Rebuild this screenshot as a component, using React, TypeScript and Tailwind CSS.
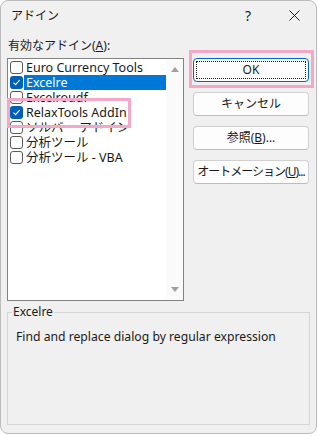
import React from "react";

const items: { label: string; checked: boolean; selected?: boolean }[] = [
  { label: "Euro Currency Tools", checked: false },
  { label: "Excelre", checked: true, selected: true },
  { label: "Excelroudf", checked: false },
  { label: "RelaxTools AddIn", checked: true },
  { label: "ソルバー アドイン", checked: false },
  { label: "分析ツール", checked: false },
  { label: "分析ツール - VBA", checked: false },
];

function Check({ checked }: { checked: boolean }) {
  if (checked) {
    return (
      <div className="w-[13px] h-[13px] rounded-[3px] bg-[#005fb8] flex items-center justify-center shrink-0">
        <svg width="9" height="9" viewBox="0 0 9 9">
          <path d="M1.5 4.6 L3.6 6.6 L7.6 2.2" fill="none" stroke="white" strokeWidth="1.1" />
        </svg>
      </div>
    );
  }
  return <div className="w-[13px] h-[13px] rounded-[3px] border border-[#5a5a5a] bg-white shrink-0" />;
}

function Btn({ children, focus }: { children: React.ReactNode; focus?: boolean }) {
  if (focus) {
    return (
      <div className="w-[116px] h-[24px] rounded-[4px] border border-[#0067c0] bg-[#fdfdfd] p-[2px]">
        <div className="w-full h-full border border-dotted border-[#1a1a1a] flex items-center justify-center text-[12px] text-[#1a1a1a]">
          <span className="whitespace-nowrap">{children}</span>
        </div>
      </div>
    );
  }
  return (
    <div className="w-[116px] h-[24px] rounded-[4px] border border-[#d0d0d0] border-b-[#bcbcbc] bg-[#fdfdfd] flex items-center justify-center text-[12px] text-[#1a1a1a]">
      <span className="whitespace-nowrap">{children}</span>
    </div>
  );
}

export default function App() {
  return (
    <div className="w-[318px] h-[436px] bg-white relative font-['Noto_Sans','Noto_Sans_CJK_JP',sans-serif] leading-[16px] text-[#1a1a1a]">
      <div className="w-[317px] h-[434px] rounded-[8px] border border-[#bcbcbc] bg-[#f0f0f0] flex flex-col">
        {/* title bar */}
        <div className="h-[29px] flex items-center pl-[10px] text-[12px]">
          <span className="flex-1">アドイン</span>
          <span className="w-[20px] text-center text-[14px] mr-[30px]">?</span>
          <div className="w-[12px] flex items-center justify-center mr-[16px]">
            <svg width="11" height="11" viewBox="0 0 11 11">
              <path d="M0.5 0.5 L10.5 10.5 M10.5 0.5 L0.5 10.5" stroke="#1a1a1a" strokeWidth="1" />
            </svg>
          </div>
        </div>
        {/* body */}
        <div className="flex pl-[6px]">
          <div className="flex flex-col w-[177px]">
            <div className="mt-[8px] h-[16px] pl-[1px] text-[12px]">
              有効なアドイン(<span className="underline">A</span>):
            </div>
            <div className="mt-[4px] h-[243px] border border-[#828282] bg-white flex">
              <div className="flex-1 flex flex-col pt-[1px] pl-[2px]">
                {items.map((it) => (
                  <div key={it.label} className="h-[15px] flex items-center">
                    <Check checked={it.checked} />
                    <span
                      className={
                        it.selected
                          ? "ml-[1px] pl-[2px] h-[15px] flex-1 bg-[#0078d7] text-white text-[12.5px] leading-[15px] whitespace-nowrap"
                          : "ml-[1px] pl-[2px] h-[15px] text-[12.5px] leading-[15px] whitespace-nowrap"
                      }
                    >
                      {it.label}
                    </span>
                  </div>
                ))}
              </div>
              <div className="w-[17px] bg-[#fafafa] flex flex-col items-center justify-between py-[8px]">
                <svg width="8" height="5" viewBox="0 0 8 5">
                  <path d="M0 5 L4 0 L8 5 Z" fill="#a0a0a0" />
                </svg>
                <svg width="8" height="5" viewBox="0 0 8 5">
                  <path d="M0 0 L4 5 L8 0 Z" fill="#a0a0a0" />
                </svg>
              </div>
            </div>
          </div>
          <div className="ml-[9px] mt-[28px] flex flex-col gap-[10px]">
            <Btn focus>OK</Btn>
            <Btn>キャンセル</Btn>
            <Btn>
              参照(<span className="underline">B</span>)...
            </Btn>
            <Btn>
              <span className="tracking-[-1px]">
                オートメーション(<span className="underline">U</span>)...
              </span>
            </Btn>
          </div>
        </div>
        {/* group box */}
        <div className="ml-[6px] mt-[11px] w-[303px] h-[113px] border border-[#d5d5d5] relative pl-[8px] pt-[16px]">
          <span className="absolute left-[4px] top-[-9px] px-[1px] bg-[#f0f0f0] text-[12px] leading-[16px]">Excelre</span>
          <div className="text-[12.2px]">Find and replace dialog by regular expression</div>
        </div>
      </div>
      {/* pink highlight boxes */}
      <div className="absolute left-[189px] top-[50px] w-[125px] h-[38px] border-[3px] border-[#f4a8c8]" />
      <div className="absolute left-[7px] top-[98px] w-[124px] h-[30px] border-[3px] border-[#f4a8c8]" />
    </div>
  );
}
